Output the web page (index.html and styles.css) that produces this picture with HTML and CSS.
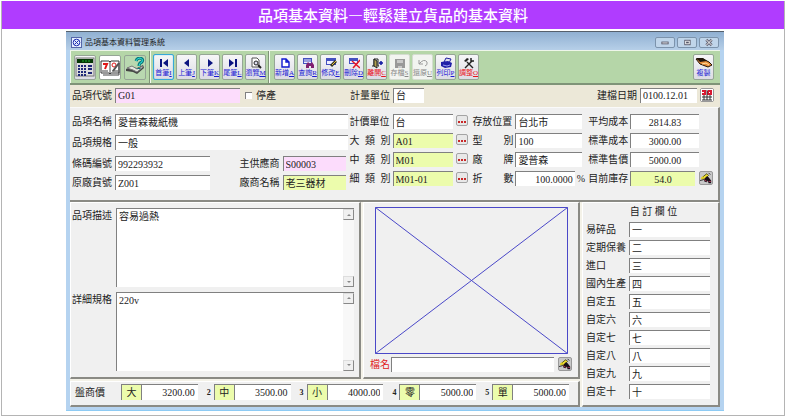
FILE: index.html
```html
<!DOCTYPE html>
<html lang="zh-Hant">
<head>
<meta charset="utf-8">
<title>品項基本資料</title>
<link rel="stylesheet" href="styles.css">
</head>
<body>
<svg class="sprite" aria-hidden="true">
  <symbol id="find" viewBox="0 0 14 14">
    <path d="M4 5 8 2 10 4 5 9 3 8Z" fill="#f0e030" stroke="#44440c"/>
    <path d="M1 7 3 5 5 6 2 9Z" fill="#e0d020"/>
    <path d="M5 8 8 5 10 6 13 10V13H10L9 10 8 12 5 11Z" fill="#181018"/>
    <path d="M10 11H13M5 9 8 11" stroke="#b03858" fill="none"/>
    <path d="M0 10 4 9M10 1 12 3" stroke="#222"/>
  </symbol>
</svg>
<div class="page">
  <h1 class="banner">品項基本資料—輕鬆建立貨品的基本資料</h1>
  <main class="stage">
    <section class="window">
      <header class="titlebar">
        <svg class="app-icon" viewBox="0 0 11 11"><rect x=".5" y=".5" width="10" height="10" fill="#e4ecff" stroke="#5566a8"/><circle cx="5.5" cy="5.5" r="3.3" fill="none" stroke="#2030b0"/><path d="M3.5 3.5 7.5 7.5M7.5 3.5 3.5 7.5" stroke="#2030b0"/></svg>
        <span class="caption">品項基本資料管理系統</span>
        <button class="win-btn" aria-label="最小化"><svg viewBox="0 0 18 10"><rect x="5.500" y="4.500" width="7" height="2" fill="#fff" stroke="#556"/></svg></button>
        <button class="win-btn" aria-label="最大化"><svg viewBox="0 0 18 10"><rect x="6.500" y="2.500" width="6" height="5" fill="#fff" stroke="#556"/><path d="M8 5H11" stroke="#556" stroke-width="2"/></svg></button>
        <button class="win-btn" aria-label="關閉"><svg viewBox="0 0 18 10"><path d="M6 2 12 8M12 2 6 8" stroke="#667" stroke-width="3"/><path d="M6 2 12 8M12 2 6 8" stroke="#fff"/></svg></button>
      </header>

      <nav class="toolbar">
        <div class="tools big">
          <button class="tool" aria-label="計算機"><svg viewBox="0 0 20 20"><rect x="1" y="1" width="18" height="18" fill="#ddd" stroke="#777"/><rect x="2" y="2" width="16" height="4" fill="#063806"/><path d="M7 4H16" stroke="#20b030" stroke-dasharray="2 1"/><path d="M3 9H12M3 12H12M3 15H12M3 18H12" stroke="#202878" stroke-width="2" stroke-dasharray="2 1"/><path d="M13 9H17M13 12H17M13 16H17" stroke="#202878" stroke-width="2"/></svg></button>
          <button class="tool white" aria-label="行事曆"><svg viewBox="0 0 20 20"><path d="M1 4H9L10 5 11 4H19V16H11L10 17 9 16H1Z" fill="#fff" stroke="#333"/><path d="M10 5V17M2 14H8M12 14H18M19 6V18H3" stroke="#444" fill="none"/><path d="M3 7H7L5 12" stroke="#e01818" stroke-width="2" fill="none"/><circle cx="14" cy="8" r="2" fill="none" stroke="#e01818"/><path d="M13 14 19 6" stroke="#555" stroke-width="2"/></svg></button>
          <button class="tool green" aria-label="說明"><svg viewBox="0 0 20 20"><path d="M1 12 5 10 12 11 18 8 19 11 12 17 8 15 1 14Z" fill="#444"/><path d="M2 11 7 9 12 12 18 9V10L12 15 8 13Z" fill="#e4e8e0" stroke="#777"/><path d="M11 4Q12 1 15 1Q19 2 17 5Q14 6 14 9M14 11V12" stroke="#08797c" stroke-width="3" fill="none"/><path d="M11 4Q12 1 15 1Q19 2 17 5Q14 6 14 9" stroke="#30e0d8" fill="none"/></svg></button>
        </div>
        <div class="tools">
          <button class="tool active"><svg viewBox="0 0 12 12"><path d="M3 2V10" stroke="#0c1480" stroke-width="2"/><path d="M10 2V10L5 6Z" fill="#0c1480"/></svg><span>首筆<u>I</u></span></button>
          <button class="tool"><svg viewBox="0 0 12 12"><path d="M8 2V10L3 6Z" fill="#0c1480"/></svg><span>上筆<u>J</u></span></button>
          <button class="tool"><svg viewBox="0 0 12 12"><path d="M4 2V10L9 6Z" fill="#0c1480"/></svg><span>下筆<u>K</u></span></button>
          <button class="tool"><svg viewBox="0 0 12 12"><path d="M9 2V10" stroke="#0c1480" stroke-width="2"/><path d="M2 2V10L7 6Z" fill="#0c1480"/></svg><span>尾筆<u>L</u></span></button>
          <button class="tool"><svg viewBox="0 0 12 12"><path d="M2 1H7L9 3V10H2Z" fill="#fff" stroke="#555"/><circle cx="6" cy="6" r="2" fill="#dde" stroke="#222"/><path d="M8 8 11 11" stroke="#222" stroke-width="2"/></svg><span>瀏覽<u>M</u></span></button>
        </div>
        <div class="tools last">
          <button class="tool"><svg viewBox="0 0 12 12"><path d="M3 2H7L10 5V10H3Z M7 2V5H10" fill="#fff" stroke="#1018d0" stroke-width="1.400"/></svg><span>新增<u>A</u></span></button>
          <button class="tool"><svg viewBox="0 0 12 12"><rect x="1.500" y="1.500" width="8" height="5" fill="#eef" stroke="#4450c0"/><path d="M2 2H9M2 4H9" stroke="#4450c0"/><path d="M4 11V8L6 5 8 7 10 5 12 8V11H9V9H7V11Z" fill="#802070"/></svg><span>查詢<u>R</u></span></button>
          <button class="tool"><svg viewBox="0 0 12 12"><rect x="1.500" y="1.500" width="9" height="6" fill="#eef" stroke="#4450c0"/><path d="M2 3H10" stroke="#4450c0" stroke-width="2"/><path d="M11 4 6 9" stroke="#332" stroke-width="3"/><path d="M11 4 7 8" stroke="#e8c040"/></svg><span>修改<u>E</u></span></button>
          <button class="tool"><svg viewBox="0 0 12 12"><rect x="1.500" y="1.500" width="8" height="5" fill="#eef" stroke="#4450c0"/><path d="M2 3H9" stroke="#4450c0" stroke-width="2"/><path d="M4 4 12 11M12 3 5 11" stroke="#e81828" stroke-width="1.500"/></svg><span>刪除<u>D</u></span></button>
          <button class="tool red"><svg viewBox="0 0 12 12"><path d="M1 9H3V2H7V9H8" fill="none" stroke="#222"/><path d="M3 2 6 4V11L3 9Z" fill="#b0a050" stroke="#222"/><path d="M8 6H12M10 4V8" stroke="#1018a0" stroke-width="1.500"/></svg><span>離開<u>C</u></span></button>
          <button class="tool" disabled><svg viewBox="0 0 12 12"><path d="M1 2H11V11H1Z" fill="#999"/><path d="M3 3H9V6H3ZM4 9H8V11H4Z" fill="#c8c8c8"/></svg><span>存檔<u>S</u></span></button>
          <button class="tool" disabled><svg viewBox="0 0 12 12"><path d="M2 3V7H6M2 7Q7 1 10 5Q11 8 8 9" fill="none" stroke="#999"/></svg><span>還原<u>U</u></span></button>
          <button class="tool"><svg viewBox="0 0 12 12"><path d="M4 5 6 1 11 2 9 6Z" fill="#dde" stroke="#2020a0"/><path d="M1 5 8 4 12 6 11 10 5 11 1 9Z" fill="#2020a8"/><path d="M3 8 7 9 10 8" stroke="#9aa0f0" fill="none"/></svg><span>列印<u>P</u></span></button>
          <button class="tool red"><svg viewBox="0 0 12 12"><path d="M2 11 9 4M4 5 10 11" stroke="#222" stroke-width="1.400"/><path d="M1 4 4 1 6 2 3 5Z" fill="#222"/><path d="M8 1V4H11" fill="none" stroke="#222" stroke-width="1.500"/></svg><span>調整<u>O</u></span></button>
        </div>
        <button class="tool copy"><svg viewBox="0 0 18 12"><path d="M1 2H8L14 5 17 8 13 10 5 7Z" fill="#e88c38" stroke="#221408"/><path d="M1 1H8L12 4 5 5Z" fill="#20140c"/><path d="M7 7 11 6 14 8" stroke="#ffe0a0" fill="none"/></svg><span>複製</span></button>
      </nav>

      <div class="keys">
        <div class="field code"><label for="code">品項代號</label><input id="code" class="pink" value="G01"></div>
        <label class="check"><input type="checkbox">停產</label>
        <div class="field unit"><label for="unit">計量單位</label><input id="unit" value="台"></div>
        <div class="field date"><label for="date">建檔日期</label><input id="date" value="0100.12.01"></div>
        <button class="mini cal" aria-label="選擇日期"><svg viewBox="0 0 12 12"><rect width="12" height="12" fill="#fff"/><path d="M1 2H4V5H1M7 2H10V5H7V2" stroke="#d81830" stroke-width="2" fill="none"/><path d="M1 8H11M1 11H11M6 1V11M3 6V11M9 6V11" stroke="#333"/></svg></button>
      </div>

      <div class="details">
        <div class="names">
          <div class="stack wide">
            <div class="field"><label for="name">品項名稱</label><input id="name" value="愛普森裁紙機"></div>
            <div class="field"><label for="spec">品項規格</label><input id="spec" value="一般"></div>
          </div>
          <div class="pair">
            <div class="stack">
              <div class="field"><label for="bar">條碼編號</label><input id="bar" value="992293932"></div>
              <div class="field"><label for="maker">原廠貨號</label><input id="maker" value="Z001"></div>
            </div>
            <div class="stack vendor">
              <div class="field"><label for="vendor">主供應商</label><input id="vendor" class="pink" value="S00003"></div>
              <div class="field"><label for="vname">廠商名稱</label><input id="vname" class="lime" value="老三器材"></div>
            </div>
          </div>
        </div>
        <div class="stack kinds">
          <div class="field"><label for="k1">計價單位</label><input id="k1" value="台"><button class="more" aria-label="選擇單位"></button></div>
          <div class="field"><label class="spread" for="k2"><span>大</span><span>類</span><span>別</span></label><input id="k2" class="lime" value="A01"><button class="more" aria-label="選擇大類別"></button></div>
          <div class="field"><label class="spread" for="k3"><span>中</span><span>類</span><span>別</span></label><input id="k3" class="lime" value="M01"><button class="more" aria-label="選擇中類別"></button></div>
          <div class="field"><label class="spread" for="k4"><span>細</span><span>類</span><span>別</span></label><input id="k4" class="lime" value="M01-01"><button class="more" aria-label="選擇細類別"></button></div>
        </div>
        <div class="stack places">
          <div class="field"><label for="p1">存放位置</label><input id="p1" value="台北市"></div>
          <div class="field"><label class="spread" for="p2"><span>型</span><span>別</span></label><input id="p2" value="100"></div>
          <div class="field"><label class="spread" for="p3"><span>廠</span><span>牌</span></label><input id="p3" value="愛普森"></div>
          <div class="field rate"><label class="spread" for="p4"><span>折</span><span>數</span></label><input id="p4" class="num" value="100.0000"><span class="percent">%</span></div>
        </div>
        <div class="stack costs">
          <div class="field"><label for="c1">平均成本</label><input id="c1" value="2814.83"></div>
          <div class="field"><label for="c2">標準成本</label><input id="c2" value="3000.00"></div>
          <div class="field"><label for="c3">標準售價</label><input id="c3" value="5000.00"></div>
          <div class="field stock"><label for="c4">目前庫存</label><input id="c4" class="lime" value="54.0"><button class="mini" aria-label="查詢庫存"><svg><use href="#find"/></svg></button></div>
        </div>
      </div>

      <div class="lower">
        <div class="panel notes">
          <label for="desc">品項描述</label>
          <div class="memo"><textarea id="desc">容易過熱</textarea><div class="scroll"><button class="up" aria-label="向上捲動"></button><button class="down" aria-label="向下捲動"></button></div></div>
          <label for="long">詳細規格</label>
          <div class="memo"><textarea id="long">220v</textarea><div class="scroll"><button class="up" aria-label="向上捲動"></button><button class="down" aria-label="向下捲動"></button></div></div>
        </div>
        <div class="panel photo">
          <svg class="frame" viewBox="0 0 193 147" preserveAspectRatio="none"><path d="M.5 .5H192.500V146.500H.5ZM.5 .5 192.500 146.500M192.500 .5 .5 146.500" fill="none" stroke="#4a48c8"/></svg>
          <div class="field file"><label for="file">檔名</label><input id="file"><button class="mini" aria-label="選擇檔案"><svg><use href="#find"/></svg></button></div>
        </div>
        <div class="panel prices">
          <span class="lead">盤商價</span>
          <div class="price"><b></b><label for="w1">大</label><input id="w1" value="3200.00"></div>
          <div class="price"><b>2</b><label for="w2">中</label><input id="w2" value="3500.00"></div>
          <div class="price"><b>3</b><label for="w3">小</label><input id="w3" value="4000.00"></div>
          <div class="price"><b>4</b><label for="w4">零</label><input id="w4" value="5000.00"></div>
          <div class="price"><b>5</b><label for="w5">單</label><input id="w5" value="5000.00"></div>
        </div>
        <div class="panel custom">
          <h2>自 訂 欄 位</h2>
          <div class="field"><label for="u1">易碎品</label><input id="u1" value="一"></div>
          <div class="field"><label for="u2">定期保養</label><input id="u2" value="二"></div>
          <div class="field"><label for="u3">進口</label><input id="u3" value="三"></div>
          <div class="field"><label for="u4">國內生產</label><input id="u4" value="四"></div>
          <div class="field"><label for="u5">自定五</label><input id="u5" value="五"></div>
          <div class="field"><label for="u6">自定六</label><input id="u6" value="六"></div>
          <div class="field"><label for="u7">自定七</label><input id="u7" value="七"></div>
          <div class="field"><label for="u8">自定八</label><input id="u8" value="八"></div>
          <div class="field"><label for="u9">自定九</label><input id="u9" value="九"></div>
          <div class="field"><label for="u10">自定十</label><input id="u10" value="十"></div>
        </div>
      </div>
    </section>
  </main>
</div>
</body>
</html>
```
FILE: styles.css
```css
* { box-sizing: border-box; }

body {
  margin: 0;
  background: #fff;
  color: #222;
  font: 10px/15px "Liberation Serif", "Noto Sans CJK TC", serif;
}

button, input, textarea {
  margin: 0;
  padding: 0;
  border: 0;
  border-radius: 0;
  font: inherit;
  color: inherit;
}

.sprite { display: none; }

.page {
  margin: 1px 1px 0;
  border: 1px solid #b4b4b4;
  border-top: 0;
}

.banner {
  margin: 0;
  background: #b03cff;
  color: #fff;
  font: 500 15px/28px "Noto Sans CJK TC", sans-serif;
  text-align: center;
}

.stage { padding: 2px 60px 4px 64px; }

.window {
  padding: 0 4px 3px;
  background: #b5d3f0;
  border-bottom: 1px solid #8ecbf4;
}

/* title bar */
.titlebar {
  display: flex;
  align-items: center;
  gap: 2px;
  height: 19px;
  margin: 0 -4px;
  padding: 2px 5px 0;
  border-top: 1px solid #55606c;
  background: linear-gradient(#90b0d2, #b6cfe8);
}
.app-icon { width: 11px; height: 11px; }
.caption {
  flex: 1;
  padding-left: 1px;
  font-size: 8px;
}
.win-btn {
  width: 20px;
  height: 11px;
  border: 1px solid #7c93ac;
  border-radius: 2px;
  background: #c0d5ea;
}
.win-btn svg { display: block; width: 18px; height: 9px; }

/* toolbar */
.toolbar {
  display: flex;
  align-items: stretch;
  height: 35px;
  background: #b5d6a8;
  border-top: 1px solid #eef6ea;
  border-bottom: 2px solid #7f9478;
}
.tools {
  display: flex;
  align-items: center;
  gap: 2px;
  padding: 0 2px;
  border-right: 1px solid #7f9478;
  border-left: 1px solid #f4faf0;
}
.tools.big { gap: 3px; padding: 0 3px; }
.tools.last { padding-left: 4px; border-right: 0; }
.tool {
  display: flex;
  flex-direction: column;
  align-items: center;
  justify-content: center;
  width: 21px;
  height: 26px;
  border: 1px solid #96a596;
  border-radius: 2px;
  background: linear-gradient(#f6f6f8, #dcdce4);
  color: #1a1ad4;
  font: 7px/9px "Liberation Serif", "Noto Sans CJK TC", serif;
  white-space: nowrap;
}
.tool svg { width: 12px; height: 12px; }
.tool.active { border-color: #38a8d8; box-shadow: inset 0 0 1px #38a8d8; }
.tool.red { color: #e8141c; }
.tool:disabled { color: #888; background: #f2f4f0; border-color: #d4dcd0; }
.big .tool { width: 22px; height: 25px; }
.big .tool svg { width: 20px; height: 20px; }
.tool.white { background: #fff; }
.tool.green { background: #b9d8b0; }
.tool.copy { align-self: center; margin: 0 6px 0 auto; }
.tool.copy svg { width: 18px; }

/* labelled inputs */
.field { display: flex; height: 15px; }
.field label { flex: none; width: 43px; }
.field input {
  flex: 1;
  min-width: 0;
  padding: 0 2px;
  border-top: 1px solid #808080;
  border-left: 1px solid #808080;
  background: #fff;
}
.field .pink { background: #fcdcfc; }
.field .lime { background: #ecfcac; }
.field .num { text-align: right; }
.field label.spread {
  display: flex;
  justify-content: space-between;
  padding-right: 2px;
}
.mini {
  width: 14px;
  height: 14px;
  border: 1px solid #999;
  border-radius: 2px;
  background: #c8c8c8;
}
.mini svg { display: block; width: 12px; height: 12px; }

.keys {
  display: flex;
  align-items: center;
  height: 22px;
  padding: 0 6px 2px 2px;
  background: #ece8d8;
}
.code { width: 168px; }
.check { display: flex; align-items: center; gap: 4px; margin-left: 5px; width: 105px; }
.check input {
  appearance: none;
  width: 7px;
  height: 7px;
  border-top: 1px solid #808080;
  border-left: 1px solid #808080;
  background: #fff;
}
.unit { width: 74px; }
.date { width: 100px; margin-left: auto; }
.cal { margin-left: 3px; }

/* main data */
.details {
  display: grid;
  grid-template-columns: minmax(0, 278fr) minmax(0, 123fr) minmax(0, 116fr) minmax(0, 126fr);
  padding: 6px 4px 10px 2px;
  background: #f0f0f0;
  border-top: 1px solid #fafafa;
  border-right: 2px solid #8a8a84;
  border-bottom: 2px solid #8a8a84;
}
.stack { display: flex; flex-direction: column; gap: 4px; }
.wide { gap: 6px; margin-bottom: 6px; padding-right: 2px; }
.pair { display: flex; justify-content: space-between; padding-right: 4px; }
.pair .stack { width: 138px; }
.pair .vendor { width: 106px; }
.kinds .field { padding-right: 4px; }
.more {
  width: 12px;
  height: 11px;
  margin: 1px 0 0 3px;
  border: 1px solid #a4a4a4;
  border-radius: 2px;
  background: linear-gradient(90deg, #c82828 2px, transparent 2px) 1px 5px / 3px 2px repeat-x #e8e8e8;
}
.percent { padding-left: 2px; }
.places .field { padding-right: 6px; }
.places .rate { padding-right: 3px; }
.costs .field { padding-right: 15px; }
.costs .field label { width: 42px; }
.costs input { text-align: center; }
.costs .stock { padding-right: 1px; }
.costs .mini { margin-left: 4px; }

/* lower area */
.lower {
  display: grid;
  grid-template-columns: minmax(0, 291fr) minmax(0, 217fr) minmax(0, 138fr);
  grid-template-rows: auto auto;
  gap: 2px;
  background: #f4f2e8;
}
.panel {
  min-width: 0;
  background: #f0f0f0;
  border-top: 1px solid #fff;
  border-left: 1px solid #fff;
  border-right: 2px solid #8a8a84;
  border-bottom: 2px solid #8a8a84;
}
.notes {
  display: grid;
  grid-template-columns: 44px 1fr;
  gap: 4px 0;
  padding: 5px 5px 6px 1px;
}
.memo {
  display: flex;
  height: 79px;
  border-top: 1px solid #808080;
  border-left: 1px solid #808080;
  background: #fff;
}
.memo textarea {
  flex: 1;
  min-width: 0;
  padding: 0 2px;
  resize: none;
  overflow: hidden;
  background: #fff;
}
.scroll {
  display: flex;
  flex-direction: column;
  justify-content: space-between;
  width: 11px;
  background: #f8f8f8;
}
.scroll button {
  display: grid;
  place-items: center;
  height: 11px;
  border: 1px solid;
  border-color: #ddd #888 #888 #ddd;
  background: #f0f0f0;
}
.scroll button::before {
  content: "";
  border: 2px solid transparent;
}
.scroll .up::before { border-top: 0; border-bottom-color: #888; }
.scroll .down::before { border-bottom: 0; border-top-color: #888; }

.photo { padding: 4px 6px 5px 6px; }
.frame { display: block; width: calc(100% - 9px); height: 147px; margin: 0 4px 3px 5px; }
.file label { width: 21px; color: #e02020; }
.file .mini { margin-left: 4px; }

.prices {
  grid-column: 1 / 3;
  display: flex;
  align-items: center;
  padding: 2px 9px 5px 4px;
}
.lead { width: 30px; white-space: nowrap; }
.price { flex: 1; min-width: 0; display: flex; height: 16px; }
.price b {
  width: 16px;
  padding-right: 3px;
  font: bold 8px/17px "Liberation Serif", serif;
  text-align: right;
}
.price label {
  width: 20px;
  border-top: 1px solid #808080;
  border-left: 1px solid #808080;
  background: #ecfcac;
  text-align: center;
}
.price input {
  flex: 1;
  min-width: 0;
  padding-right: 3px;
  border-top: 1px solid #808080;
  border-left: 1px solid #808080;
  background: #fff;
  text-align: right;
}

.custom {
  grid-column: 3;
  grid-row: 1 / 3;
  display: flex;
  flex-direction: column;
  gap: 3px;
  padding: 1px 8px 4px 3px;
}
.custom h2 {
  margin: 0;
  padding-left: 11px;
  font: inherit;
  text-align: center;
}
```
